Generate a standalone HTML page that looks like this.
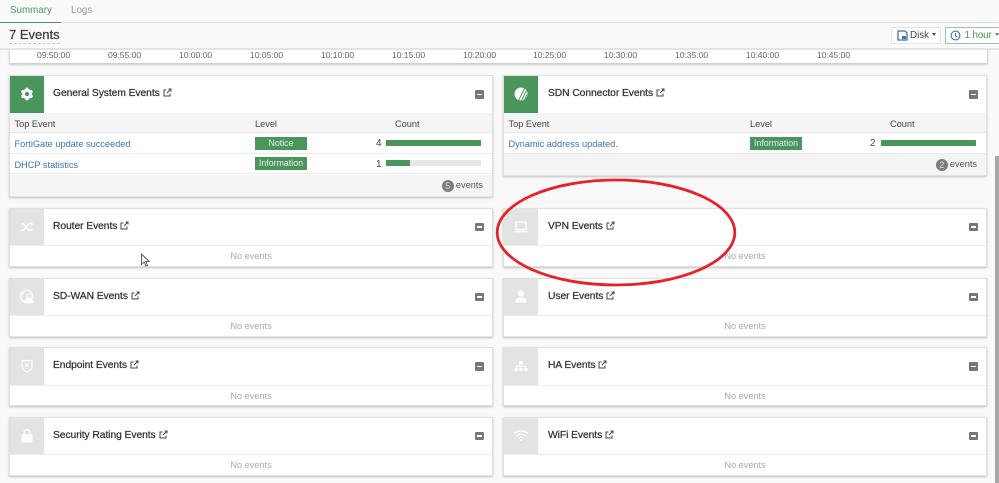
<!DOCTYPE html>
<html><head><meta charset="utf-8">
<style>
html,body{margin:0;padding:0}
body{width:999px;height:483px;overflow:hidden;background:#f9f9f9;position:relative;font-family:"Liberation Sans",sans-serif;font-size:10px;color:#444}
.a{position:absolute;white-space:nowrap}
.card{position:absolute;width:482px;background:#fff;box-shadow:0 0 0 1px #e0e0e0,0 1px 2px 1px #c0c0c0}
.ic{position:absolute;left:0;top:0;width:34px;height:36.500px;background:#e3e3e3}
.ic.g{background:#4a955b}
.ic svg{position:absolute;left:7px;top:8px;opacity:.9}
.ic.g svg{opacity:1}
.t{position:absolute;left:43px;top:10px;font-size:10.300px;line-height:15px;color:#333;-webkit-text-stroke:.25px #333;letter-spacing:-.07px;white-space:nowrap}
.r .t{left:44px}
.t svg{margin-left:3px;vertical-align:-1px}
.min{position:absolute;right:8.500px;top:14px;width:8.500px;height:8.500px;background:#777;border-radius:1px}
.min:after{content:"";position:absolute;left:1.500px;top:3.500px;width:5.500px;height:1.500px;background:#fff}
.hl{position:absolute;left:0;right:0;top:36.500px;height:1px;background:#ececec}
.ne{position:absolute;left:0;right:0;top:37.500px;height:20px;text-align:center;line-height:20px;color:#aaa;font-size:9.200px}
.th{position:absolute;left:0;right:0;top:36.500px;height:20.500px;background:#f5f5f5;border-bottom:1px solid #e8e8e8;line-height:22px;font-size:9.200px;color:#444;box-sizing:border-box}
.th span,.row span{position:absolute;white-space:nowrap}
.row{position:absolute;left:0;right:0;height:20.500px;box-sizing:border-box;border-bottom:1px solid #ebebeb;line-height:22px;font-size:9.200px;background:#fff}
.lnk{color:#3a76a8;left:4.500px}
.bd{left:245px;top:3.500px;width:52px;height:13px;background:#4a955b;color:#e6f2e8;text-align:center;line-height:13px;font-size:8.800px}
.bar{left:376px;top:6.500px;width:95px;height:6px;background:#e6e6e6}
.bar i{display:block;height:6px;background:#4a955b}
.n{left:366px;color:#444;font-size:10px}
.ft{position:absolute;left:0;right:0;background:#f4f4f4;height:21.500px;line-height:20px;font-size:9.200px;text-align:right;padding-right:9px;box-sizing:border-box;color:#555}
.ft b{display:inline-block;width:12px;height:12px;border-radius:50%;background:#7d7d7d;color:#ddd;font-weight:normal;text-align:center;line-height:12px;font-size:9px;margin-right:2px;vertical-align:-1px}
.tk{position:absolute;top:50px;font-size:8.600px;color:#666;letter-spacing:-.05px;white-space:nowrap}
.btn{position:absolute;top:27px;height:17px;background:#fff;box-sizing:border-box;line-height:16px;font-size:9.800px;white-space:nowrap}
.car{display:inline-block;width:0;height:0;border:2.500px solid transparent;border-top:3px solid #444;border-bottom:0;vertical-align:2px;margin-left:3px}
</style></head><body>

<div class="a" style="left:0;top:0;width:999px;height:22px;background:#fafafa;border-bottom:1px solid #ddd"></div>
<div class="a" style="left:10px;top:4px;font-size:9.800px;line-height:14px;color:#4a955b">Summary</div>
<div class="a" style="left:71px;top:4px;font-size:9.800px;line-height:14px;color:#999">Logs</div>
<div class="a" style="left:0;top:21.500px;width:61px;height:1.500px;background:#4a955b"></div>

<div class="a" style="left:10px;top:49px;width:977px;height:14px;background:#fff;box-shadow:0 1px 2px 1px #ccc"></div>
<div class="a" style="left:0;top:23px;width:999px;height:25px;background:#fafafa;border-bottom:2px solid #e4e4e4"></div>
<div class="a" style="left:9px;top:26px;font-size:13px;line-height:18px;color:#444;-webkit-text-stroke:.3px #444;border-bottom:1px dashed #ccc;height:17px">7 Events</div>

<div class="tk" style="left:37px">09:50:00</div><div class="tk" style="left:108px">09:55:00</div><div class="tk" style="left:179px">10:00:00</div><div class="tk" style="left:250px">10:05:00</div><div class="tk" style="left:321px">10:10:00</div><div class="tk" style="left:392px">10:15:00</div><div class="tk" style="left:463px">10:20:00</div><div class="tk" style="left:533px">10:25:00</div><div class="tk" style="left:604px">10:30:00</div><div class="tk" style="left:675px">10:35:00</div><div class="tk" style="left:746px">10:40:00</div><div class="tk" style="left:817px">10:45:00</div>

<div class="btn" style="left:891px;width:50px;border:1px solid #e2e2e2;padding-left:18px;color:#444">Disk<span class="car"></span>
<svg style="position:absolute;left:5px;top:2px" width="11" height="11" viewBox="0 0 11 11"><path d="M1 1h7l2 2v7H1z" fill="none" stroke="#3a76a8" stroke-width="1.300"/><rect x="5" y="6" width="4" height="3" fill="#3a76a8"/></svg></div>
<div class="btn" style="left:945px;width:56px;border:1px solid #9cc6a5;padding-left:18.500px;color:#4a955b;letter-spacing:-.1px">1 hour<span class="car" style="border-top-color:#4a955b"></span>
<svg style="position:absolute;left:4px;top:2px" width="11" height="11" viewBox="0 0 11 11"><circle cx="5.500" cy="5.500" r="4.400" fill="none" stroke="#3a76a8" stroke-width="1.100"/><path d="M5.500 3v3l2 1" fill="none" stroke="#3a76a8" stroke-width="1"/></svg></div>

<div class="a" style="left:995px;top:156px;width:4px;height:327px;background:#a9a9a9"></div>

<!-- General System -->
<div class="card" style="left:10px;top:76px;height:120px">
 <div class="ic g"><svg width="20" height="20" viewBox="0 0 20 20"><circle cx="10" cy="10" r="3.700" fill="none" stroke="#fff" stroke-width="3"/><path d="M10 3.800v2M10 14.200v2M4.600 6.900l1.700 1M13.700 12.100l1.700 1M4.600 13.100l1.700-1M13.700 7.900l1.700-1" stroke="#fff" stroke-width="2.800"/></svg></div>
 <div class="t">General System Events<svg width="9" height="9" viewBox="0 0 9 9"><path d="M7 5.500V8H1V2h2.500M4 5l4-4M5.500 1H8v2.500" fill="none" stroke="#444" stroke-width="1"/></svg></div>
 <div class="min"></div>
 <div class="th"><span style="left:4.500px">Top Event</span><span style="left:245px">Level</span><span style="left:385px">Count</span></div>
 <div class="row" style="top:57px"><span class="lnk">FortiGate update succeeded</span><span class="bd">Notice</span><span class="n">4</span><span class="bar"><i style="width:95px"></i></span></div>
 <div class="row" style="top:77.500px"><span class="lnk">DHCP statistics</span><span class="bd">Information</span><span class="n">1</span><span class="bar"><i style="width:24px"></i></span></div>
 <div class="ft" style="top:98.500px"><b>5</b>events</div>
</div>

<!-- SDN -->
<div class="card r" style="left:504px;top:76px;height:99px">
 <div class="ic g"><svg width="20" height="20" viewBox="0 0 20 20"><circle cx="10" cy="10" r="6.500" fill="#fff"/><path d="M7.500 16.500l6-12M10.500 16.500l5-10M13.500 15.500l2.500-5" stroke="#4a955b" stroke-width=".9"/></svg></div>
 <div class="t">SDN Connector Events<svg width="9" height="9" viewBox="0 0 9 9"><path d="M7 5.500V8H1V2h2.500M4 5l4-4M5.500 1H8v2.500" fill="none" stroke="#444" stroke-width="1"/></svg></div>
 <div class="min"></div>
 <div class="th"><span style="left:4.500px">Top Event</span><span style="left:246px">Level</span><span style="left:386px">Count</span></div>
 <div class="row" style="top:57px"><span class="lnk">Dynamic address updated.</span><span class="bd" style="left:246px">Information</span><span class="n">2</span><span class="bar" style="left:377px"><i style="width:95px"></i></span></div>
 <div class="ft" style="top:77.500px"><b>2</b>events</div>
</div>

<!-- Router -->
<div class="card" style="left:10px;top:208.500px;height:57.500px">
 <div class="ic"><svg width="20" height="20" viewBox="0 0 20 20"><path d="M4 7h2.500l5 6H14M4 13h2.500l5-6H14" fill="none" stroke="#fff" stroke-width="1.500"/><path d="M13.500 5l3 2-3 2zM13.500 11l3 2-3 2z" fill="#fff"/></svg></div>
 <div class="t">Router Events<svg width="9" height="9" viewBox="0 0 9 9"><path d="M7 5.500V8H1V2h2.500M4 5l4-4M5.500 1H8v2.500" fill="none" stroke="#444" stroke-width="1"/></svg></div>
 <div class="min"></div><div class="hl"></div><div class="ne">No events</div>
</div>

<!-- SD-WAN -->
<div class="card" style="left:10px;top:278.500px;height:57px">
 <div class="ic"><svg width="20" height="20" viewBox="0 0 20 20"><circle cx="9.500" cy="9" r="6" fill="none" stroke="#fff" stroke-width="1.300"/><path d="M4 8c3-1 3-4 5-5M8 15c0-3 3-3 2-6s3-2 5-2" fill="none" stroke="#fff" stroke-width="1"/><path d="M8.500 16.500a2.300 2.300 0 0 1 .6-4.400 3.200 3.200 0 0 1 6 .6 2 2 0 0 1 .4 3.800z" fill="#fff"/></svg></div>
 <div class="t">SD-WAN Events<svg width="9" height="9" viewBox="0 0 9 9"><path d="M7 5.500V8H1V2h2.500M4 5l4-4M5.500 1H8v2.500" fill="none" stroke="#444" stroke-width="1"/></svg></div>
 <div class="min"></div><div class="hl"></div><div class="ne">No events</div>
</div>

<!-- Endpoint -->
<div class="card" style="left:10px;top:348px;height:57px">
 <div class="ic"><svg width="20" height="20" viewBox="0 0 20 20"><path d="M5 4.500h10v6c0 3-2.500 4.500-5 5.500-2.500-1-5-2.500-5-5.500z" fill="none" stroke="#fff" stroke-width="1.300"/><path d="M8.500 7.500l3 3M11.500 7.500l-3 3" stroke="#fff" stroke-width="1.100"/></svg></div>
 <div class="t">Endpoint Events<svg width="9" height="9" viewBox="0 0 9 9"><path d="M7 5.500V8H1V2h2.500M4 5l4-4M5.500 1H8v2.500" fill="none" stroke="#444" stroke-width="1"/></svg></div>
 <div class="min"></div><div class="hl"></div><div class="ne">No events</div>
</div>

<!-- Security Rating -->
<div class="card" style="left:10px;top:417.500px;height:57.500px">
 <div class="ic"><svg width="20" height="20" viewBox="0 0 20 20"><rect x="4.500" y="8" width="11" height="8.500" rx="1" fill="#fff"/><path d="M7 8.500V6.500a3 3 0 0 1 6 0v2" fill="none" stroke="#fff" stroke-width="1.500"/></svg></div>
 <div class="t">Security Rating Events<svg width="9" height="9" viewBox="0 0 9 9"><path d="M7 5.500V8H1V2h2.500M4 5l4-4M5.500 1H8v2.500" fill="none" stroke="#444" stroke-width="1"/></svg></div>
 <div class="min"></div><div class="hl"></div><div class="ne">No events</div>
</div>

<!-- VPN -->
<div class="card r" style="left:504px;top:208.500px;height:57.500px">
 <div class="ic"><svg width="20" height="20" viewBox="0 0 20 20"><rect x="5" y="5" width="10" height="7.500" fill="none" stroke="#fff" stroke-width="1.300"/><path d="M3.500 14.500h13" stroke="#fff" stroke-width="1.800"/></svg></div>
 <div class="t">VPN Events<svg width="9" height="9" viewBox="0 0 9 9"><path d="M7 5.500V8H1V2h2.500M4 5l4-4M5.500 1H8v2.500" fill="none" stroke="#444" stroke-width="1"/></svg></div>
 <div class="min"></div><div class="hl"></div><div class="ne">No events</div>
</div>

<!-- User -->
<div class="card r" style="left:504px;top:278.500px;height:57px">
 <div class="ic"><svg width="20" height="20" viewBox="0 0 20 20"><circle cx="10" cy="6.500" r="3.300" fill="#fff"/><path d="M4.500 15.500V14c0-2.500 2-3.500 5.500-3.500s5.500 1 5.500 3.500v1.500z" fill="#fff"/></svg></div>
 <div class="t">User Events<svg width="9" height="9" viewBox="0 0 9 9"><path d="M7 5.500V8H1V2h2.500M4 5l4-4M5.500 1H8v2.500" fill="none" stroke="#444" stroke-width="1"/></svg></div>
 <div class="min"></div><div class="hl"></div><div class="ne">No events</div>
</div>

<!-- HA -->
<div class="card r" style="left:504px;top:348px;height:57px">
 <div class="ic"><svg width="20" height="20" viewBox="0 0 20 20"><rect x="8" y="5" width="4" height="3.500" fill="#fff"/><rect x="3.500" y="12" width="3.500" height="3" fill="#fff"/><rect x="8.200" y="12" width="3.500" height="3" fill="#fff"/><rect x="13" y="12" width="3.500" height="3" fill="#fff"/><path d="M10 8.500V12M5.200 12v-1.800h9.600V12" fill="none" stroke="#fff" stroke-width="1"/></svg></div>
 <div class="t">HA Events<svg width="9" height="9" viewBox="0 0 9 9"><path d="M7 5.500V8H1V2h2.500M4 5l4-4M5.500 1H8v2.500" fill="none" stroke="#444" stroke-width="1"/></svg></div>
 <div class="min"></div><div class="hl"></div><div class="ne">No events</div>
</div>

<!-- WiFi -->
<div class="card r" style="left:504px;top:417.500px;height:57.500px">
 <div class="ic"><svg width="20" height="20" viewBox="0 0 20 20"><path d="M3.500 7.500a9.500 9.500 0 0 1 13 0M5.800 9.800a6.200 6.200 0 0 1 8.400 0M8 12a3 3 0 0 1 4 0" fill="none" stroke="#fff" stroke-width="1.300"/><circle cx="10" cy="14" r="1.100" fill="#fff"/></svg></div>
 <div class="t">WiFi Events<svg width="9" height="9" viewBox="0 0 9 9"><path d="M7 5.500V8H1V2h2.500M4 5l4-4M5.500 1H8v2.500" fill="none" stroke="#444" stroke-width="1"/></svg></div>
 <div class="min"></div><div class="hl"></div><div class="ne">No events</div>
</div>

<!-- Cursor -->
<svg class="a" style="left:140px;top:253px" width="11" height="15" viewBox="0 0 11 15"><path d="M1.500 1v10.500l2.700-2.400 1.800 4 1.500-.7-1.800-3.900h3.500z" fill="#fff" stroke="#555" stroke-width=".9"/></svg>

<!-- Red ellipse -->
<svg class="a" style="left:0;top:0;pointer-events:none" width="999" height="483" viewBox="0 0 999 483"><ellipse cx="616" cy="232.500" rx="118.800" ry="52.500" fill="none" stroke="#e8202a" stroke-width="2.800"/></svg>

</body></html>
